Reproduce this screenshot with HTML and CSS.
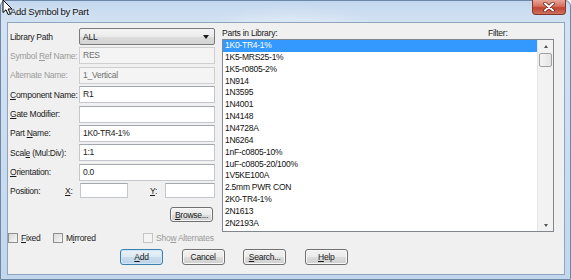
FILE: index.html
```html
<!DOCTYPE html>
<html lang="en">
<head>
    <meta charset="UTF-8">
    <meta name="viewport" content="width=device-width, initial-scale=1.0">
    <title>Add Symbol by Part</title>
    <link rel="stylesheet" href="styles.css">
</head>
<body>
    <div class="window">
        <div class="titlebar">
            <span class="title">Add Symbol by Part</span>
            <div class="close-btn">
                <svg width="12" height="10" viewBox="0 0 12 10">
                    <path d="M2 1.5 L10 8.5 M10 1.5 L2 8.5" stroke="#5a2018" stroke-width="3.4" stroke-linecap="round"/>
                    <path d="M2 1.5 L10 8.5 M10 1.5 L2 8.5" stroke="#ffffff" stroke-width="2" stroke-linecap="round"/>
                </svg>
            </div>
        </div>

        <div class="client">
            <div class="main">
                <div class="form">
                    <div class="fields">
                        <span class="label">Library Path</span>
                        <div class="combo"><span>ALL</span><span class="combo-arrow"></span></div>

                        <span class="label disabled">Symbol <u>R</u>ef Name:</span>
                        <div class="box box-disabled">RES</div>

                        <span class="label disabled">Alternate Name:</span>
                        <div class="box box-disabled">1_Vertical</div>

                        <span class="label"><u>C</u>omponent Name:</span>
                        <div class="box">R1</div>

                        <span class="label"><u>G</u>ate Modifier:</span>
                        <div class="box"></div>

                        <span class="label">Part <u>N</u>ame:</span>
                        <div class="box">1K0-TR4-1%</div>

                        <span class="label">Scal<u>e</u> (Mul:Div):</span>
                        <div class="box">1:1</div>

                        <span class="label"><u>O</u>rientation:</span>
                        <div class="box">0.0</div>
                    </div>

                    <div class="position-row">
                        <span class="pos-label">Position:</span>
                        <span class="axis"><u>X</u>:</span>
                        <div class="box box-x"></div>
                        <span class="axis axis-y"><u>Y</u>:</span>
                        <div class="box box-y"></div>
                    </div>

                    <div class="browse-row">
                        <div class="btn"><u>B</u>rowse...</div>
                    </div>
                </div>

                <div class="parts">
                    <div class="parts-head">
                        <span class="parts-title">Parts in Library:</span>
                        <span>Filter:</span>
                    </div>
                    <div class="listbox">
                        <ul class="items">
                            <li class="selected">1K0-TR4-1%</li>
                            <li>1K5-MRS25-1%</li>
                            <li>1K5-r0805-2%</li>
                            <li>1N914</li>
                            <li>1N3595</li>
                            <li>1N4001</li>
                            <li>1N4148</li>
                            <li>1N4728A</li>
                            <li>1N6264</li>
                            <li>1nF-c0805-10%</li>
                            <li>1uF-c0805-20/100%</li>
                            <li>1V5KE100A</li>
                            <li>2.5mm PWR CON</li>
                            <li>2K0-TR4-1%</li>
                            <li>2N1613</li>
                            <li>2N2193A</li>
                        </ul>
                        <div class="scrollbar">
                            <div class="sb-arrow"><span class="tri-up"></span></div>
                            <div class="sb-thumb"></div>
                            <div class="sb-track"></div>
                            <div class="sb-arrow"><span class="tri-down"></span></div>
                        </div>
                    </div>
                </div>
            </div>

            <div class="checks">
                <div class="check check-fixed"><span class="checkbox"></span><span><u>F</u>ixed</span></div>
                <div class="check check-mirrored"><span class="checkbox"></span><span>M<u>i</u>rrored</span></div>
                <div class="check disabled"><span class="checkbox checkbox-disabled"></span><span>Sho<u>w</u> Alternates</span></div>
            </div>

            <div class="buttons">
                <div class="btn btn-focus"><u>A</u>dd</div>
                <div class="btn">Cancel</div>
                <div class="btn"><u>S</u>earch...</div>
                <div class="btn"><u>H</u>elp</div>
            </div>
        </div>

        <svg class="cursor" width="12" height="17" viewBox="0 0 12 17">
            <path d="M1 1 L1 13.5 L4 10.8 L6.2 15.6 L8.3 14.7 L6.1 10 L10 10 Z" fill="#ffffff" stroke="#000000" stroke-width="1" stroke-linejoin="round"/>
        </svg>
    </div>
</body>
</html>
```

FILE: styles.css
```css
html, body {
    margin: 0;
    padding: 0;
}

body {
    width: 571px;
    height: 280px;
    overflow: hidden;
    font-family: "Liberation Sans", Arial, sans-serif;
    font-size: 8.5px;
    letter-spacing: -0.25px;
    color: #1a1a1a;
    background: #ffffff;
}

u {
    text-decoration: underline;
    text-underline-offset: 1px;
}

.window {
    position: relative;
    width: 571px;
    height: 280px;
    box-sizing: border-box;
    display: flex;
    flex-direction: column;
    padding: 0 5px 4px 6px;
    border: 1px solid #6d87a6;
    border-radius: 6px 6px 0 0;
    background:
        radial-gradient(ellipse 120px 40px at 290px 30px, rgba(255, 255, 255, 0.35), rgba(255, 255, 255, 0) 70%),
        linear-gradient(to bottom, #c3d7ee, #d4e3f3 22px, #c2d6ed 100%);
}

/* title bar */
.titlebar {
    display: flex;
    align-items: flex-start;
    height: 21px;
    margin: 0 -5px 0 -6px;
}

.title {
    padding: 5px 0 0 9px;
    font-size: 9.5px;
    letter-spacing: -0.3px;
    color: #111111;
    text-shadow: 0 0 4px rgba(255, 255, 255, 0.9);
}

.close-btn {
    margin: -1px 4px 0 auto;
    width: 34px;
    height: 15px;
    box-sizing: border-box;
    border: 1px solid #83382c;
    border-top: none;
    border-radius: 0 0 4px 4px;
    background: linear-gradient(to bottom, #e9a597, #d5705e 45%, #c2432f 55%, #d0705f);
    display: flex;
    align-items: center;
    justify-content: center;
}

/* client area */
.client {
    flex: 1;
    display: flex;
    flex-direction: column;
    border: 1px solid #8ea5c0;
    background: #f0f0f0;
}

.main {
    display: flex;
    height: 209px;
}

.form {
    width: 207px;
    padding-top: 5px;
}

.fields {
    display: grid;
    grid-template-columns: 71px 136px;
    grid-auto-rows: 17px;
    row-gap: 2.4px;
}

.label {
    align-self: center;
    padding-left: 2px;
    white-space: nowrap;
}

.disabled {
    color: #9a9a9a;
}

.box {
    box-sizing: border-box;
    height: 17px;
    padding: 0 3px;
    line-height: 15px;
    background: #ffffff;
    border: 1px solid #c3c6cc;
    border-top-color: #a3a7ae;
    white-space: nowrap;
}

.box-disabled {
    background: #f4f4f4;
    border-color: #cfcfcf;
    color: #707070;
}

.combo {
    box-sizing: border-box;
    height: 17px;
    display: flex;
    align-items: center;
    justify-content: space-between;
    padding: 0 5px 0 3px;
    border: 1px solid #7a7a7a;
    border-radius: 2px;
    background: linear-gradient(to bottom, #f4f4f4, #ebebeb 50%, #dddddd 51%, #d3d3d3);
}

.combo-arrow {
    width: 0;
    height: 0;
    border-left: 3px solid transparent;
    border-right: 3px solid transparent;
    border-top: 4px solid #1a1a1a;
}

.position-row {
    display: flex;
    align-items: center;
    height: 15px;
    margin-top: 2.4px;
}

.pos-label {
    width: 55px;
    padding-left: 2px;
}

.axis {
    width: 15px;
}

.axis-y {
    margin-left: 22px;
}

.position-row .box {
    height: 15px;
    line-height: 13px;
}

.box-x {
    width: 48px;
}

.box-y {
    width: 50px;
}

.browse-row {
    display: flex;
    justify-content: flex-end;
    margin-top: 9px;
    padding-right: 2px;
}

/* buttons */
.btn {
    box-sizing: border-box;
    width: 43px;
    height: 16px;
    display: flex;
    align-items: center;
    justify-content: center;
    border: 1px solid #707070;
    border-radius: 3px;
    background: linear-gradient(to bottom, #f2f2f2, #ebebeb 50%, #dddddd 51%, #cfcfcf);
    box-shadow: inset 0 0 0 1px #f8f8f8;
    white-space: nowrap;
}

.browse-row .btn {
    height: 15px;
}

.btn-focus {
    border-color: #3c7fb1;
    background: linear-gradient(to bottom, #e8f1f8, #dce9f3 50%, #c9dcec 51%, #bcd2e6);
    box-shadow: inset 0 0 0 1px #cfe6f7;
}

/* parts list */
.parts {
    margin-left: 7px;
    width: 332px;
    padding-top: 4px;
}

.parts-head {
    display: flex;
    height: 12px;
    line-height: 12px;
}

.parts-title {
    width: 266px;
}

.listbox {
    box-sizing: border-box;
    height: 193px;
    display: flex;
    border: 1px solid #82868f;
    background: #ffffff;
}

.items {
    flex: 1;
    margin: 0;
    padding: 0;
    list-style: none;
}

.items li {
    height: 11.87px;
    line-height: 11.87px;
    padding-left: 2px;
    color: #111111;
    white-space: nowrap;
}

.items li.selected {
    background: #3399ff;
    color: #ffffff;
}

.scrollbar {
    width: 15px;
    display: flex;
    flex-direction: column;
    background: #f2f2f2;
    border-left: 1px solid #e6e6e6;
}

.sb-arrow {
    height: 12px;
    display: flex;
    align-items: center;
    justify-content: center;
}

.tri-up, .tri-down {
    width: 0;
    height: 0;
    border-left: 2.5px solid transparent;
    border-right: 2.5px solid transparent;
}

.tri-up {
    border-bottom: 3px solid #555555;
}

.tri-down {
    border-top: 3px solid #555555;
}

.sb-thumb {
    height: 14px;
    margin: 1px 1px 0;
    box-sizing: border-box;
    border: 1px solid #a0a0a0;
    border-radius: 2px;
    background: linear-gradient(to right, #f4f4f4, #e4e4e4);
}

.sb-track {
    flex: 1;
}

/* check boxes */
.checks {
    display: flex;
    align-items: center;
    height: 11px;
}

.check {
    display: flex;
    align-items: center;
    gap: 3px;
}

.check-fixed {
    width: 45px;
}

.check-mirrored {
    width: 90px;
}

.checkbox {
    box-sizing: border-box;
    width: 10px;
    height: 10px;
    border: 1px solid #8e8f8f;
    background: linear-gradient(135deg, #d9d9d9, #f6f6f6);
}

.checkbox-disabled {
    border-color: #c5c5c5;
    background: #f4f4f4;
}

.buttons {
    display: flex;
    gap: 18.6px;
    margin-top: 6px;
    padding-left: 112px;
}

.cursor {
    position: absolute;
    left: 1px;
    top: -2px;
}
```
